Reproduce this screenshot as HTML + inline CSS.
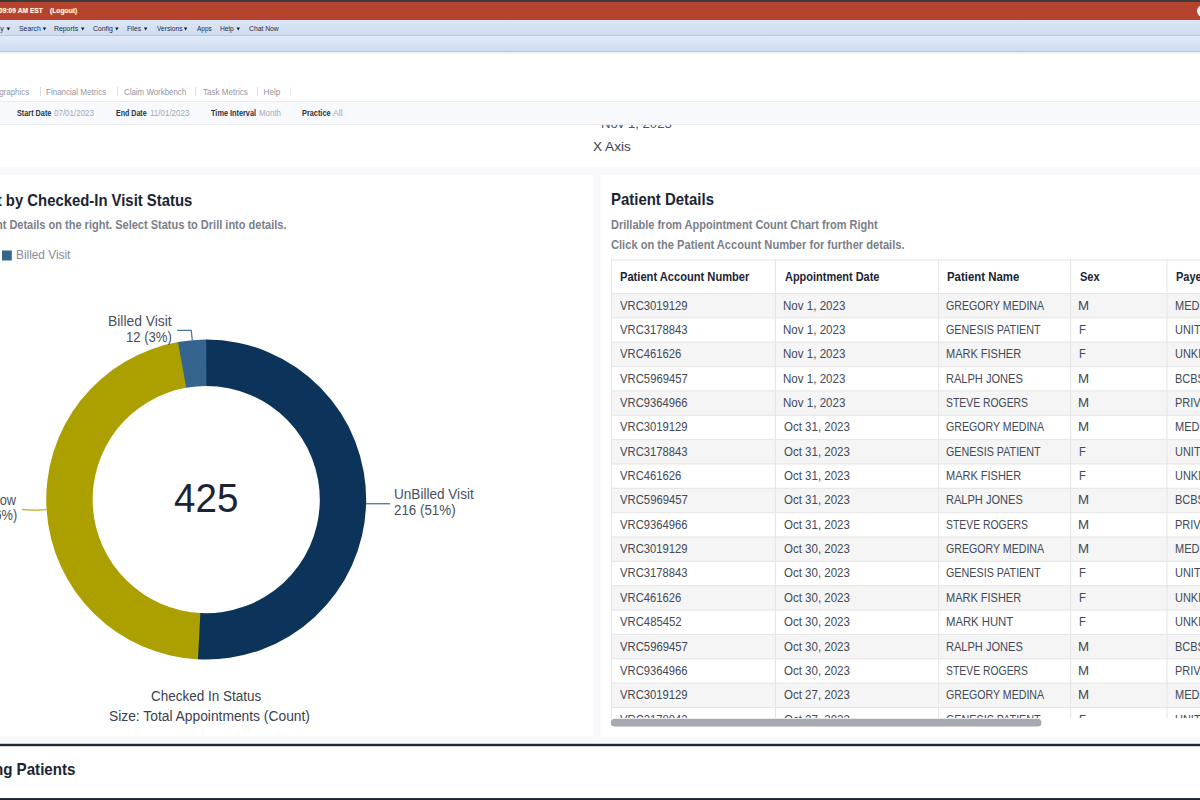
<!DOCTYPE html>
<html><head><meta charset="utf-8"><title>Dashboard</title>
<style>
html,body{margin:0;padding:0}
body{width:1200px;height:800px;overflow:hidden;position:relative;background:#fff;font-family:'Liberation Sans',sans-serif;}
.a{position:absolute}
.t{position:absolute;white-space:pre;transform-origin:0 0;font-family:'Liberation Sans',sans-serif;}
.car{position:absolute;width:0;height:0;border-left:1.7px solid transparent;border-right:1.7px solid transparent;border-top:2.3px solid #16233f;top:27.8px}
.sep{position:absolute;width:1px;top:87px;height:9px;background:#dcdde1}
.row{position:absolute;left:611.5px;width:600px;height:24.35px}
.vb{position:absolute;width:1px;top:260px;height:470px;background:#e7e7e9}
</style></head><body>
<div class="a" style="left:0;top:0;width:1200px;height:2px;background:#3b3b3b"></div>
<div class="a" style="left:0;top:2px;width:1200px;height:18px;background:#b5432d"></div>
<div class="a" style="left:0;top:20px;width:1200px;height:15px;background:linear-gradient(#dbe6f5,#d0ddef);border-bottom:1px solid #afc8eb"></div>
<div class="a" style="left:0;top:36px;width:1200px;height:15px;background:linear-gradient(#e0eafa,#d0dcf0);border-bottom:1px solid #aec8ee"></div>
<div class="a" style="left:0;top:52px;width:1200px;height:2px;background:linear-gradient(#e2ecfb,#f6f9fe)"></div>
<div class="a" style="left:1197.4px;top:5.3px;width:20px;height:11.8px;border-radius:6px;background:#fffaf6"></div>
<div class="t" style="left:-35.82px;top:6.9px;font-size:7.2px;line-height:7.2px;font-weight:700;transform:scaleX(0.93);color:#fff5e0;text-shadow:0 0 1px rgba(255,220,150,.6);">11/02/2023 09:09 AM EST</div>
<div class="t" style="left:49.77px;top:6.9px;font-size:7.2px;line-height:7.2px;font-weight:700;transform:scaleX(0.9391);color:#fff5e0;text-shadow:0 0 1px rgba(255,220,150,.6);">(Logout)</div>
<div class="t" style="left:-17.62px;top:25.25px;font-size:7.5px;line-height:7.5px;font-weight:400;transform:scaleX(0.93);color:#1b2c4e;">History</div>
<div class="t" style="left:18.77px;top:25.25px;font-size:7.5px;line-height:7.5px;font-weight:400;transform:scaleX(0.913);color:#1b2c4e;">Search</div>
<div class="t" style="left:54.34px;top:25.25px;font-size:7.5px;line-height:7.5px;font-weight:400;transform:scaleX(0.9176);color:#1b2c4e;">Reports</div>
<div class="t" style="left:93.17px;top:25.25px;font-size:7.5px;line-height:7.5px;font-weight:400;transform:scaleX(0.9143);color:#1b2c4e;">Config</div>
<div class="t" style="left:127.46px;top:25.25px;font-size:7.5px;line-height:7.5px;font-weight:400;transform:scaleX(0.8852);color:#1b2c4e;">Files</div>
<div class="t" style="left:156.5px;top:25.25px;font-size:7.5px;line-height:7.5px;font-weight:400;transform:scaleX(0.8877);color:#1b2c4e;">Versions</div>
<div class="t" style="left:196.8px;top:25.25px;font-size:7.5px;line-height:7.5px;font-weight:400;transform:scaleX(0.8647);color:#1b2c4e;">Apps</div>
<div class="t" style="left:219.95px;top:25.25px;font-size:7.5px;line-height:7.5px;font-weight:400;transform:scaleX(0.8949);color:#1b2c4e;">Help</div>
<div class="t" style="left:248.77px;top:25.25px;font-size:7.5px;line-height:7.5px;font-weight:400;transform:scaleX(0.9038);color:#1b2c4e;">Chat Now</div>
<svg class="a" style="left:0;top:20px" width="300" height="16" viewBox="0 20 300 16"><path d="M6.60 27.6h3.5l-1.75 2.8z" fill="#111a2c"/><path d="M42.70 27.6h3.5l-1.75 2.8z" fill="#111a2c"/><path d="M80.95 27.6h3.5l-1.75 2.8z" fill="#111a2c"/><path d="M115.10 27.6h3.5l-1.75 2.8z" fill="#111a2c"/><path d="M143.90 27.6h3.5l-1.75 2.8z" fill="#111a2c"/><path d="M183.80 27.6h3.5l-1.75 2.8z" fill="#111a2c"/><path d="M236.50 27.6h3.5l-1.75 2.8z" fill="#111a2c"/></svg>
<div class="t" style="left:-21.92px;top:89.0px;font-size:8.2px;line-height:8.2px;font-weight:400;transform:scaleX(0.97);color:#92969f;">Demographics</div>
<div class="t" style="left:46.01px;top:89.0px;font-size:8.2px;line-height:8.2px;font-weight:400;transform:scaleX(0.9794);color:#92969f;">Financial Metrics</div>
<div class="t" style="left:123.76px;top:89.0px;font-size:8.2px;line-height:8.2px;font-weight:400;transform:scaleX(0.9647);color:#92969f;">Claim Workbench</div>
<div class="t" style="left:202.5px;top:89.0px;font-size:8.2px;line-height:8.2px;font-weight:400;transform:scaleX(0.9834);color:#92969f;">Task Metrics</div>
<div class="t" style="left:263.5px;top:89.0px;font-size:8.2px;line-height:8.2px;font-weight:400;transform:scaleX(1.0);color:#92969f;">Help</div>
<div class="sep" style="left:39.5px;background:#dcdde1"></div>
<div class="sep" style="left:117px;background:#dcdde1"></div>
<div class="sep" style="left:194.5px;background:#dcdde1"></div>
<div class="sep" style="left:257px;background:#dcdde1"></div>
<div class="sep" style="left:289.5px;background:#ececef"></div>
<div class="t" style="left:593.0px;top:140.25px;font-size:13.4px;line-height:13.4px;font-weight:400;transform:scaleX(1.0137);color:#3a4150;">X Axis</div>
<div class="t" style="left:600.5px;top:116.5px;font-size:13.4px;line-height:13.4px;transform:scaleX(0.98);color:#4d5463">Nov 1, 2023</div>
<div class="a" style="left:0;top:101px;width:1200px;height:21.6px;background:#f8f9fd;border-top:1px solid #e9ebf0;border-bottom:1px solid #e9ebf0;box-sizing:content-box"></div>
<div class="t" style="left:16.78px;top:109.8px;font-size:8.2px;line-height:8.2px;font-weight:700;transform:scaleX(0.8889);color:#2a3242;">Start Date</div>
<div class="t" style="left:54.26px;top:109.8px;font-size:8.2px;line-height:8.2px;font-weight:400;transform:scaleX(0.9753);color:#a4a8b2;">07/01/2023</div>
<div class="t" style="left:115.57px;top:109.8px;font-size:8.2px;line-height:8.2px;font-weight:700;transform:scaleX(0.8633);color:#2a3242;">End Date</div>
<div class="t" style="left:149.51px;top:109.8px;font-size:8.2px;line-height:8.2px;font-weight:400;transform:scaleX(0.9747);color:#a4a8b2;">11/01/2023</div>
<div class="t" style="left:211.0px;top:109.8px;font-size:8.2px;line-height:8.2px;font-weight:700;transform:scaleX(0.8945);color:#2a3242;">Time Interval</div>
<div class="t" style="left:258.52px;top:109.8px;font-size:8.2px;line-height:8.2px;font-weight:400;transform:scaleX(0.9655);color:#a4a8b2;">Month</div>
<div class="t" style="left:301.55px;top:109.8px;font-size:8.2px;line-height:8.2px;font-weight:700;transform:scaleX(0.896);color:#2a3242;">Practice</div>
<div class="t" style="left:333.0px;top:109.8px;font-size:8.2px;line-height:8.2px;font-weight:400;transform:scaleX(1.0588);color:#a4a8b2;">All</div>
<svg class="a" style="left:0;top:160px" width="1200" height="640" viewBox="0 160 1200 640"><rect x="0" y="167" width="1200" height="577.5" fill="#f8f9fd"/><rect x="-10" y="175" width="603.5" height="561.3" fill="#fff"/><rect x="601" y="175" width="610" height="561.3" fill="#fff"/></svg>
<div class="t" style="left:-136.8px;top:192.5px;font-size:16.6px;line-height:16.6px;font-weight:700;transform:scaleX(0.8959);color:#1c2434;">Appointment Count by Checked-In Visit Status</div>
<div class="t" style="left:-116.02px;top:219.4px;font-size:12.3px;line-height:12.3px;font-weight:700;transform:scaleX(0.8953);color:#7b7f8a;">Drill Through to Patient Details on the right. Select Status to Drill into details.</div>
<div class="t" style="left:16.26px;top:249.4px;font-size:12.6px;line-height:12.6px;font-weight:400;transform:scaleX(0.9392);color:#888d97;">Billed Visit</div>
<svg class="a" style="left:0;top:0" width="600" height="800" viewBox="0 0 600 800"><path d="M199.09 659.39A160 160 0 0 1 179.11 341.87L186.98 387.60A113.6 113.6 0 0 0 201.17 613.04Z" fill="#aca000"/><path d="M178.01 342.06A160 160 0 0 1 207.09 339.55L206.84 385.95A113.6 113.6 0 0 0 186.20 387.73Z" fill="#35648f"/><path d="M206.25 339.55A160 160 0 1 1 197.97 659.34L200.37 613.00A113.6 113.6 0 1 0 206.25 385.95Z" fill="#0c345b"/><rect x="2" y="250.5" width="9.8" height="10" fill="#35648f"/><path d="M177.2 330.3H191.2L192.3 340" fill="none" stroke="#4c77a0" stroke-width="1.3"/><path d="M366 503.7H390" fill="none" stroke="#587ea6" stroke-width="1.4"/><path d="M22 509.6L36 510.3L46.7 509.4" fill="none" stroke="#c6bc4e" stroke-width="1.5"/></svg>
<div class="t" style="left:108.2px;top:314.8px;font-size:13.8px;line-height:13.8px;font-weight:400;transform:scaleX(1.004);color:#4a5160;">Billed Visit</div>
<div class="t" style="left:126.25px;top:330.7px;font-size:13.8px;line-height:13.8px;font-weight:400;transform:scaleX(0.9484);color:#4a5160;">12 (3%)</div>
<div class="t" style="left:394.02px;top:488.1px;font-size:13.8px;line-height:13.8px;font-weight:400;transform:scaleX(0.9837);color:#4a5160;">UnBilled Visit</div>
<div class="t" style="left:394.27px;top:503.7px;font-size:13.8px;line-height:13.8px;font-weight:400;transform:scaleX(0.9677);color:#4a5160;">216 (51%)</div>
<div class="t" style="left:-35.88px;top:493.5px;font-size:13.8px;line-height:13.8px;font-weight:400;transform:scaleX(0.93);color:#4a5160;">No Show</div>
<div class="t" style="left:-41.96px;top:509.0px;font-size:13.8px;line-height:13.8px;font-weight:400;transform:scaleX(0.93);color:#4a5160;">197 (46%)</div>
<div class="t" style="left:174.28px;top:478.8px;font-size:40.3px;line-height:40.3px;font-weight:400;transform:scaleX(0.9575);color:#1c2434;">425</div>
<div class="t" style="left:150.77px;top:689.5px;font-size:13.8px;line-height:13.8px;font-weight:400;transform:scaleX(0.9776);color:#3a4150;">Checked In Status</div>
<div class="t" style="left:108.5px;top:709.5px;font-size:13.8px;line-height:13.8px;font-weight:400;transform:scaleX(1.0013);color:#3a4150;">Size: Total Appointments (Count)</div>
<svg class="a" style="left:0;top:740px" width="1200" height="60" viewBox="0 740 1200 60"><rect x="0" y="746" width="1200" height="54" fill="#fff"/><rect x="0" y="743.8" width="1200" height="2.4" fill="#1d2838"/><rect x="0" y="798.1" width="1200" height="2" fill="#1b2330"/></svg>
<div class="t" style="left:-43.88px;top:761.5px;font-size:16.6px;line-height:16.6px;font-weight:700;transform:scaleX(0.9127);color:#1c2434;">Missing Patients</div>
<div class="t" style="left:610.6px;top:192.0px;font-size:16.6px;line-height:16.6px;font-weight:700;transform:scaleX(0.9002);color:#1c2434;">Patient Details</div>
<div class="t" style="left:610.63px;top:219.4px;font-size:12.3px;line-height:12.3px;font-weight:700;transform:scaleX(0.8945);color:#7b7f8a;">Drillable from Appointment Count Chart from Right</div>
<div class="t" style="left:610.85px;top:238.8px;font-size:12.3px;line-height:12.3px;font-weight:700;transform:scaleX(0.9039);color:#7b7f8a;">Click on the Patient Account Number for further details.</div>
<div class="a" style="left:0;top:0;width:1200px;height:727px;clip-path:inset(259px 0 0 611px)">
<svg class="a" style="left:0;top:0" width="1200" height="800" viewBox="0 0 1200 800"><rect x="611.5" y="293.50" width="600" height="24.35" fill="#f5f5f5"/><rect x="611.5" y="342.20" width="600" height="24.35" fill="#f5f5f5"/><rect x="611.5" y="390.90" width="600" height="24.35" fill="#f5f5f5"/><rect x="611.5" y="439.60" width="600" height="24.35" fill="#f5f5f5"/><rect x="611.5" y="488.30" width="600" height="24.35" fill="#f5f5f5"/><rect x="611.5" y="537.00" width="600" height="24.35" fill="#f5f5f5"/><rect x="611.5" y="585.70" width="600" height="24.35" fill="#f5f5f5"/><rect x="611.5" y="634.40" width="600" height="24.35" fill="#f5f5f5"/><rect x="611.5" y="683.10" width="600" height="24.35" fill="#f5f5f5"/><rect x="611" y="259.45" width="600" height="1.1" fill="#e6e6e8"/><rect x="611" y="292.95" width="600" height="1.1" fill="#e6e6e8"/><rect x="611" y="317.30" width="600" height="1.1" fill="#e6e6e8"/><rect x="611" y="341.65" width="600" height="1.1" fill="#e6e6e8"/><rect x="611" y="366.00" width="600" height="1.1" fill="#e6e6e8"/><rect x="611" y="390.35" width="600" height="1.1" fill="#e6e6e8"/><rect x="611" y="414.70" width="600" height="1.1" fill="#e6e6e8"/><rect x="611" y="439.05" width="600" height="1.1" fill="#e6e6e8"/><rect x="611" y="463.40" width="600" height="1.1" fill="#e6e6e8"/><rect x="611" y="487.75" width="600" height="1.1" fill="#e6e6e8"/><rect x="611" y="512.10" width="600" height="1.1" fill="#e6e6e8"/><rect x="611" y="536.45" width="600" height="1.1" fill="#e6e6e8"/><rect x="611" y="560.80" width="600" height="1.1" fill="#e6e6e8"/><rect x="611" y="585.15" width="600" height="1.1" fill="#e6e6e8"/><rect x="611" y="609.50" width="600" height="1.1" fill="#e6e6e8"/><rect x="611" y="633.85" width="600" height="1.1" fill="#e6e6e8"/><rect x="611" y="658.20" width="600" height="1.1" fill="#e6e6e8"/><rect x="611" y="682.55" width="600" height="1.1" fill="#e6e6e8"/><rect x="611" y="706.90" width="600" height="1.1" fill="#e6e6e8"/><rect x="611" y="731.25" width="600" height="1.1" fill="#e6e6e8"/><rect x="610.95" y="259.45" width="1.1" height="480" fill="#e6e6e8"/><rect x="774.95" y="259.45" width="1.1" height="480" fill="#e6e6e8"/><rect x="938.05" y="259.45" width="1.1" height="480" fill="#e6e6e8"/><rect x="1070.05" y="259.45" width="1.1" height="480" fill="#e6e6e8"/><rect x="1166.35" y="259.45" width="1.1" height="480" fill="#e6e6e8"/></svg>
<div class="t" style="left:620.02px;top:270.8px;font-size:12.2px;line-height:12.2px;font-weight:700;transform:scaleX(0.9128);color:#1c2434;">Patient Account Number</div>
<div class="t" style="left:785.38px;top:270.8px;font-size:12.2px;line-height:12.2px;font-weight:700;transform:scaleX(0.8998);color:#1c2434;">Appointment Date</div>
<div class="t" style="left:946.8px;top:270.8px;font-size:12.2px;line-height:12.2px;font-weight:700;transform:scaleX(0.9375);color:#1c2434;">Patient Name</div>
<div class="t" style="left:1079.77px;top:270.8px;font-size:12.2px;line-height:12.2px;font-weight:700;transform:scaleX(0.9059);color:#1c2434;">Sex</div>
<div class="t" style="left:1175.58px;top:270.8px;font-size:12.2px;line-height:12.2px;font-weight:700;transform:scaleX(0.9);color:#1c2434;">Payer Name</div>
<div class="t" style="left:620.0px;top:299.6px;font-size:12.2px;line-height:12.2px;font-weight:400;transform:scaleX(0.9237);color:#434957;">VRC3019129</div>
<div class="t" style="left:783.35px;top:299.6px;font-size:12.2px;line-height:12.2px;font-weight:400;transform:scaleX(0.9494);color:#434957;">Nov 1, 2023</div>
<div class="t" style="left:946.31px;top:299.6px;font-size:12.2px;line-height:12.2px;font-weight:400;transform:scaleX(0.8708);color:#434957;">GREGORY MEDINA</div>
<div class="t" style="left:1078.41px;top:299.6px;font-size:12.2px;line-height:12.2px;font-weight:400;transform:scaleX(1.0909);color:#434957;">M</div>
<div class="t" style="left:1174.85px;top:299.6px;font-size:12.2px;line-height:12.2px;font-weight:400;transform:scaleX(0.9);color:#434957;">MEDICARE</div>
<div class="t" style="left:620.0px;top:323.95px;font-size:12.2px;line-height:12.2px;font-weight:400;transform:scaleX(0.9237);color:#434957;">VRC3178843</div>
<div class="t" style="left:783.35px;top:323.95px;font-size:12.2px;line-height:12.2px;font-weight:400;transform:scaleX(0.9494);color:#434957;">Nov 1, 2023</div>
<div class="t" style="left:946.31px;top:323.95px;font-size:12.2px;line-height:12.2px;font-weight:400;transform:scaleX(0.8826);color:#434957;">GENESIS PATIENT</div>
<div class="t" style="left:1078.58px;top:323.95px;font-size:12.2px;line-height:12.2px;font-weight:400;transform:scaleX(0.9167);color:#434957;">F</div>
<div class="t" style="left:1174.85px;top:323.95px;font-size:12.2px;line-height:12.2px;font-weight:400;transform:scaleX(0.9);color:#434957;">UNITED HEALTHCARE</div>
<div class="t" style="left:620.0px;top:348.3px;font-size:12.2px;line-height:12.2px;font-weight:400;transform:scaleX(0.9242);color:#434957;">VRC461626</div>
<div class="t" style="left:783.35px;top:348.3px;font-size:12.2px;line-height:12.2px;font-weight:400;transform:scaleX(0.9494);color:#434957;">Nov 1, 2023</div>
<div class="t" style="left:945.85px;top:348.3px;font-size:12.2px;line-height:12.2px;font-weight:400;transform:scaleX(0.9021);color:#434957;">MARK FISHER</div>
<div class="t" style="left:1078.58px;top:348.3px;font-size:12.2px;line-height:12.2px;font-weight:400;transform:scaleX(0.9167);color:#434957;">F</div>
<div class="t" style="left:1174.85px;top:348.3px;font-size:12.2px;line-height:12.2px;font-weight:400;transform:scaleX(0.9);color:#434957;">UNKNOWN</div>
<div class="t" style="left:620.0px;top:372.65px;font-size:12.2px;line-height:12.2px;font-weight:400;transform:scaleX(0.9269);color:#434957;">VRC5969457</div>
<div class="t" style="left:783.35px;top:372.65px;font-size:12.2px;line-height:12.2px;font-weight:400;transform:scaleX(0.9494);color:#434957;">Nov 1, 2023</div>
<div class="t" style="left:945.84px;top:372.65px;font-size:12.2px;line-height:12.2px;font-weight:400;transform:scaleX(0.9069);color:#434957;">RALPH JONES</div>
<div class="t" style="left:1078.41px;top:372.65px;font-size:12.2px;line-height:12.2px;font-weight:400;transform:scaleX(1.0909);color:#434957;">M</div>
<div class="t" style="left:1174.85px;top:372.65px;font-size:12.2px;line-height:12.2px;font-weight:400;transform:scaleX(0.9);color:#434957;">BCBS</div>
<div class="t" style="left:620.0px;top:397.0px;font-size:12.2px;line-height:12.2px;font-weight:400;transform:scaleX(0.9237);color:#434957;">VRC9364966</div>
<div class="t" style="left:783.35px;top:397.0px;font-size:12.2px;line-height:12.2px;font-weight:400;transform:scaleX(0.9494);color:#434957;">Nov 1, 2023</div>
<div class="t" style="left:946.32px;top:397.0px;font-size:12.2px;line-height:12.2px;font-weight:400;transform:scaleX(0.853);color:#434957;">STEVE ROGERS</div>
<div class="t" style="left:1078.41px;top:397.0px;font-size:12.2px;line-height:12.2px;font-weight:400;transform:scaleX(1.0909);color:#434957;">M</div>
<div class="t" style="left:1174.85px;top:397.0px;font-size:12.2px;line-height:12.2px;font-weight:400;transform:scaleX(0.9);color:#434957;">PRIVATE PAY</div>
<div class="t" style="left:620.0px;top:421.35px;font-size:12.2px;line-height:12.2px;font-weight:400;transform:scaleX(0.9237);color:#434957;">VRC3019129</div>
<div class="t" style="left:783.83px;top:421.35px;font-size:12.2px;line-height:12.2px;font-weight:400;transform:scaleX(0.944);color:#434957;">Oct 31, 2023</div>
<div class="t" style="left:946.31px;top:421.35px;font-size:12.2px;line-height:12.2px;font-weight:400;transform:scaleX(0.8708);color:#434957;">GREGORY MEDINA</div>
<div class="t" style="left:1078.41px;top:421.35px;font-size:12.2px;line-height:12.2px;font-weight:400;transform:scaleX(1.0909);color:#434957;">M</div>
<div class="t" style="left:1174.85px;top:421.35px;font-size:12.2px;line-height:12.2px;font-weight:400;transform:scaleX(0.9);color:#434957;">MEDICARE</div>
<div class="t" style="left:620.0px;top:445.7px;font-size:12.2px;line-height:12.2px;font-weight:400;transform:scaleX(0.9237);color:#434957;">VRC3178843</div>
<div class="t" style="left:783.83px;top:445.7px;font-size:12.2px;line-height:12.2px;font-weight:400;transform:scaleX(0.944);color:#434957;">Oct 31, 2023</div>
<div class="t" style="left:946.31px;top:445.7px;font-size:12.2px;line-height:12.2px;font-weight:400;transform:scaleX(0.8826);color:#434957;">GENESIS PATIENT</div>
<div class="t" style="left:1078.58px;top:445.7px;font-size:12.2px;line-height:12.2px;font-weight:400;transform:scaleX(0.9167);color:#434957;">F</div>
<div class="t" style="left:1174.85px;top:445.7px;font-size:12.2px;line-height:12.2px;font-weight:400;transform:scaleX(0.9);color:#434957;">UNITED HEALTHCARE</div>
<div class="t" style="left:620.0px;top:470.05px;font-size:12.2px;line-height:12.2px;font-weight:400;transform:scaleX(0.9242);color:#434957;">VRC461626</div>
<div class="t" style="left:783.83px;top:470.05px;font-size:12.2px;line-height:12.2px;font-weight:400;transform:scaleX(0.944);color:#434957;">Oct 31, 2023</div>
<div class="t" style="left:945.85px;top:470.05px;font-size:12.2px;line-height:12.2px;font-weight:400;transform:scaleX(0.9021);color:#434957;">MARK FISHER</div>
<div class="t" style="left:1078.58px;top:470.05px;font-size:12.2px;line-height:12.2px;font-weight:400;transform:scaleX(0.9167);color:#434957;">F</div>
<div class="t" style="left:1174.85px;top:470.05px;font-size:12.2px;line-height:12.2px;font-weight:400;transform:scaleX(0.9);color:#434957;">UNKNOWN</div>
<div class="t" style="left:620.0px;top:494.4px;font-size:12.2px;line-height:12.2px;font-weight:400;transform:scaleX(0.9269);color:#434957;">VRC5969457</div>
<div class="t" style="left:783.83px;top:494.4px;font-size:12.2px;line-height:12.2px;font-weight:400;transform:scaleX(0.944);color:#434957;">Oct 31, 2023</div>
<div class="t" style="left:945.84px;top:494.4px;font-size:12.2px;line-height:12.2px;font-weight:400;transform:scaleX(0.9069);color:#434957;">RALPH JONES</div>
<div class="t" style="left:1078.41px;top:494.4px;font-size:12.2px;line-height:12.2px;font-weight:400;transform:scaleX(1.0909);color:#434957;">M</div>
<div class="t" style="left:1174.85px;top:494.4px;font-size:12.2px;line-height:12.2px;font-weight:400;transform:scaleX(0.9);color:#434957;">BCBS</div>
<div class="t" style="left:620.0px;top:518.75px;font-size:12.2px;line-height:12.2px;font-weight:400;transform:scaleX(0.9237);color:#434957;">VRC9364966</div>
<div class="t" style="left:783.83px;top:518.75px;font-size:12.2px;line-height:12.2px;font-weight:400;transform:scaleX(0.944);color:#434957;">Oct 31, 2023</div>
<div class="t" style="left:946.32px;top:518.75px;font-size:12.2px;line-height:12.2px;font-weight:400;transform:scaleX(0.853);color:#434957;">STEVE ROGERS</div>
<div class="t" style="left:1078.41px;top:518.75px;font-size:12.2px;line-height:12.2px;font-weight:400;transform:scaleX(1.0909);color:#434957;">M</div>
<div class="t" style="left:1174.85px;top:518.75px;font-size:12.2px;line-height:12.2px;font-weight:400;transform:scaleX(0.9);color:#434957;">PRIVATE PAY</div>
<div class="t" style="left:620.0px;top:543.1px;font-size:12.2px;line-height:12.2px;font-weight:400;transform:scaleX(0.9237);color:#434957;">VRC3019129</div>
<div class="t" style="left:783.83px;top:543.1px;font-size:12.2px;line-height:12.2px;font-weight:400;transform:scaleX(0.944);color:#434957;">Oct 30, 2023</div>
<div class="t" style="left:946.31px;top:543.1px;font-size:12.2px;line-height:12.2px;font-weight:400;transform:scaleX(0.8708);color:#434957;">GREGORY MEDINA</div>
<div class="t" style="left:1078.41px;top:543.1px;font-size:12.2px;line-height:12.2px;font-weight:400;transform:scaleX(1.0909);color:#434957;">M</div>
<div class="t" style="left:1174.85px;top:543.1px;font-size:12.2px;line-height:12.2px;font-weight:400;transform:scaleX(0.9);color:#434957;">MEDICARE</div>
<div class="t" style="left:620.0px;top:567.45px;font-size:12.2px;line-height:12.2px;font-weight:400;transform:scaleX(0.9237);color:#434957;">VRC3178843</div>
<div class="t" style="left:783.83px;top:567.45px;font-size:12.2px;line-height:12.2px;font-weight:400;transform:scaleX(0.944);color:#434957;">Oct 30, 2023</div>
<div class="t" style="left:946.31px;top:567.45px;font-size:12.2px;line-height:12.2px;font-weight:400;transform:scaleX(0.8826);color:#434957;">GENESIS PATIENT</div>
<div class="t" style="left:1078.58px;top:567.45px;font-size:12.2px;line-height:12.2px;font-weight:400;transform:scaleX(0.9167);color:#434957;">F</div>
<div class="t" style="left:1174.85px;top:567.45px;font-size:12.2px;line-height:12.2px;font-weight:400;transform:scaleX(0.9);color:#434957;">UNITED HEALTHCARE</div>
<div class="t" style="left:620.0px;top:591.8px;font-size:12.2px;line-height:12.2px;font-weight:400;transform:scaleX(0.9242);color:#434957;">VRC461626</div>
<div class="t" style="left:783.83px;top:591.8px;font-size:12.2px;line-height:12.2px;font-weight:400;transform:scaleX(0.944);color:#434957;">Oct 30, 2023</div>
<div class="t" style="left:945.85px;top:591.8px;font-size:12.2px;line-height:12.2px;font-weight:400;transform:scaleX(0.9021);color:#434957;">MARK FISHER</div>
<div class="t" style="left:1078.58px;top:591.8px;font-size:12.2px;line-height:12.2px;font-weight:400;transform:scaleX(0.9167);color:#434957;">F</div>
<div class="t" style="left:1174.85px;top:591.8px;font-size:12.2px;line-height:12.2px;font-weight:400;transform:scaleX(0.9);color:#434957;">UNKNOWN</div>
<div class="t" style="left:620.0px;top:616.15px;font-size:12.2px;line-height:12.2px;font-weight:400;transform:scaleX(0.9278);color:#434957;">VRC485452</div>
<div class="t" style="left:783.83px;top:616.15px;font-size:12.2px;line-height:12.2px;font-weight:400;transform:scaleX(0.944);color:#434957;">Oct 30, 2023</div>
<div class="t" style="left:945.57px;top:616.15px;font-size:12.2px;line-height:12.2px;font-weight:400;transform:scaleX(0.9263);color:#434957;">MARK HUNT</div>
<div class="t" style="left:1078.58px;top:616.15px;font-size:12.2px;line-height:12.2px;font-weight:400;transform:scaleX(0.9167);color:#434957;">F</div>
<div class="t" style="left:1174.85px;top:616.15px;font-size:12.2px;line-height:12.2px;font-weight:400;transform:scaleX(0.9);color:#434957;">UNKNOWN</div>
<div class="t" style="left:620.0px;top:640.5px;font-size:12.2px;line-height:12.2px;font-weight:400;transform:scaleX(0.9269);color:#434957;">VRC5969457</div>
<div class="t" style="left:783.83px;top:640.5px;font-size:12.2px;line-height:12.2px;font-weight:400;transform:scaleX(0.944);color:#434957;">Oct 30, 2023</div>
<div class="t" style="left:945.84px;top:640.5px;font-size:12.2px;line-height:12.2px;font-weight:400;transform:scaleX(0.9069);color:#434957;">RALPH JONES</div>
<div class="t" style="left:1078.41px;top:640.5px;font-size:12.2px;line-height:12.2px;font-weight:400;transform:scaleX(1.0909);color:#434957;">M</div>
<div class="t" style="left:1174.85px;top:640.5px;font-size:12.2px;line-height:12.2px;font-weight:400;transform:scaleX(0.9);color:#434957;">BCBS</div>
<div class="t" style="left:620.0px;top:664.85px;font-size:12.2px;line-height:12.2px;font-weight:400;transform:scaleX(0.9237);color:#434957;">VRC9364966</div>
<div class="t" style="left:783.83px;top:664.85px;font-size:12.2px;line-height:12.2px;font-weight:400;transform:scaleX(0.944);color:#434957;">Oct 30, 2023</div>
<div class="t" style="left:946.32px;top:664.85px;font-size:12.2px;line-height:12.2px;font-weight:400;transform:scaleX(0.853);color:#434957;">STEVE ROGERS</div>
<div class="t" style="left:1078.41px;top:664.85px;font-size:12.2px;line-height:12.2px;font-weight:400;transform:scaleX(1.0909);color:#434957;">M</div>
<div class="t" style="left:1174.85px;top:664.85px;font-size:12.2px;line-height:12.2px;font-weight:400;transform:scaleX(0.9);color:#434957;">PRIVATE PAY</div>
<div class="t" style="left:620.0px;top:689.2px;font-size:12.2px;line-height:12.2px;font-weight:400;transform:scaleX(0.9237);color:#434957;">VRC3019129</div>
<div class="t" style="left:783.83px;top:689.2px;font-size:12.2px;line-height:12.2px;font-weight:400;transform:scaleX(0.944);color:#434957;">Oct 27, 2023</div>
<div class="t" style="left:946.31px;top:689.2px;font-size:12.2px;line-height:12.2px;font-weight:400;transform:scaleX(0.8708);color:#434957;">GREGORY MEDINA</div>
<div class="t" style="left:1078.41px;top:689.2px;font-size:12.2px;line-height:12.2px;font-weight:400;transform:scaleX(1.0909);color:#434957;">M</div>
<div class="t" style="left:1174.85px;top:689.2px;font-size:12.2px;line-height:12.2px;font-weight:400;transform:scaleX(0.9);color:#434957;">MEDICARE</div>
<div class="t" style="left:620.0px;top:713.55px;font-size:12.2px;line-height:12.2px;font-weight:400;transform:scaleX(0.9237);color:#434957;">VRC3178843</div>
<div class="t" style="left:783.83px;top:713.55px;font-size:12.2px;line-height:12.2px;font-weight:400;transform:scaleX(0.944);color:#434957;">Oct 27, 2023</div>
<div class="t" style="left:946.31px;top:713.55px;font-size:12.2px;line-height:12.2px;font-weight:400;transform:scaleX(0.8826);color:#434957;">GENESIS PATIENT</div>
<div class="t" style="left:1078.58px;top:713.55px;font-size:12.2px;line-height:12.2px;font-weight:400;transform:scaleX(0.9167);color:#434957;">F</div>
<div class="t" style="left:1174.85px;top:713.55px;font-size:12.2px;line-height:12.2px;font-weight:400;transform:scaleX(0.9);color:#434957;">UNITED HEALTHCARE</div>
</div>
<div class="a" style="left:601px;top:717.5px;width:600px;height:19.5px;background:#fff"></div>
<svg class="a" style="left:600px;top:710px" width="460" height="24" viewBox="600 710 460 24"><rect x="610.8" y="718.8" width="430.6" height="7.7" rx="3.85" fill="#a6a9b0"/></svg>
</body></html>
